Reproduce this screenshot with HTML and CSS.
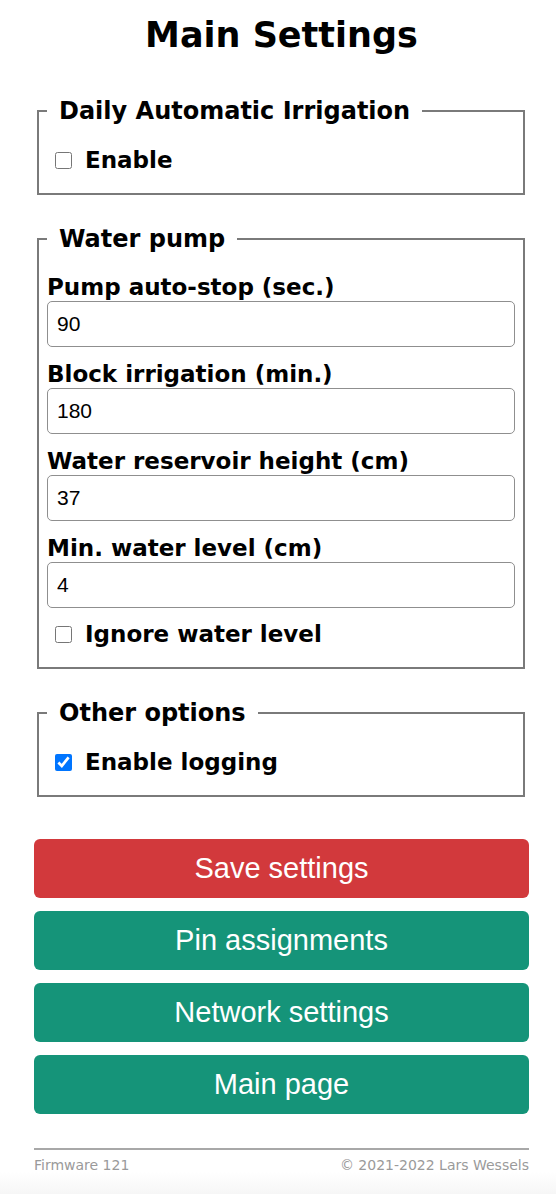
FILE: index.html
```html
<!DOCTYPE html>
<html lang="en">
<head>
<meta charset="utf-8">
<title>Main Settings</title>
<link rel="stylesheet" href="styles.css">
</head>
<body>
<div class="page">
  <h1 class="title">Main Settings</h1>
  <form class="settings">
    <fieldset class="group">
      <legend class="group-title">Daily Automatic Irrigation</legend>
      <label class="check"><input type="checkbox" class="box"><span>Enable</span></label>
    </fieldset>

    <fieldset class="group">
      <legend class="group-title">Water pump</legend>
      <div class="field">
        <label class="field-label">Pump auto-stop (sec.)</label>
        <input class="text-input" type="text" value="90">
      </div>
      <div class="field">
        <label class="field-label">Block irrigation (min.)</label>
        <input class="text-input" type="text" value="180">
      </div>
      <div class="field">
        <label class="field-label">Water reservoir height (cm)</label>
        <input class="text-input" type="text" value="37">
      </div>
      <div class="field">
        <label class="field-label">Min. water level (cm)</label>
        <input class="text-input" type="text" value="4">
      </div>
      <label class="check"><input type="checkbox" class="box"><span>Ignore water level</span></label>
    </fieldset>

    <fieldset class="group">
      <legend class="group-title">Other options</legend>
      <label class="check"><input type="checkbox" class="box" checked><span>Enable logging</span></label>
    </fieldset>

    <div class="actions">
      <button type="button" class="btn btn-save">Save settings</button>
      <button type="button" class="btn btn-nav">Pin assignments</button>
      <button type="button" class="btn btn-nav">Network settings</button>
      <button type="button" class="btn btn-nav">Main page</button>
    </div>
  </form>
  <footer class="footer">
    <span>Firmware 121</span>
    <span>© 2021-2022 Lars Wessels</span>
  </footer>
</div>
</body>
</html>
```

FILE: styles.css
```css
html {
  background: linear-gradient(to bottom, #ffffff 0, #ffffff 1172px, #f6f6f6 1194px);
  min-height: 100%;
}
body {
  margin: 0;
  font-family: "DejaVu Sans", Verdana, sans-serif;
  color: #000;
}
.page {
  width: 495px;
  margin-left: 34px;
  padding-top: 14px;
}
.title {
  margin: 0 0 41px;
  text-align: center;
  font-size: 35px;
  line-height: 42px;
  font-weight: bold;
}
.settings {
  margin: 0;
}
.group {
  margin: 0 4px 30px 3px;
  border: 2px solid #7a7a7a;
  padding: 7px 8px 19px;
  min-width: 0;
}
.group-title {
  padding: 0 12px;
  font-size: 24px;
  line-height: 28px;
  font-weight: bold;
}
.field {
  margin-top: 13px;
}
.field-label {
  display: block;
  padding-top: 1px;
  font-size: 23px;
  line-height: 27px;
  font-weight: bold;
}
.text-input {
  display: block;
  box-sizing: border-box;
  width: 100%;
  height: 46px;
  margin: 0;
  padding: 0 9px;
  border: 1px solid #8f8f8f;
  border-radius: 5px;
  font-family: "Liberation Sans", Arial, sans-serif;
  font-size: 21px;
  color: #000;
  background: #fff;
}
.check {
  display: flex;
  align-items: center;
  margin-top: 14px;
  margin-left: 8px;
  font-size: 23px;
  line-height: 28px;
  font-weight: bold;
}
.field + .check {
  margin-top: 12px;
}
.box {
  width: 17px;
  height: 17px;
  margin: 0 13px 0 0;
}
.actions {
  display: flex;
  flex-direction: column;
  gap: 13px;
  margin-top: 42px;
}
.btn {
  display: block;
  width: 100%;
  height: 59px;
  border: none;
  border-radius: 6px;
  font-family: "Liberation Sans", Arial, sans-serif;
  font-size: 29px;
  color: #fff;
  cursor: pointer;
}
.btn-save {
  background: #d2393c;
}
.btn-nav {
  background: #159479;
}
.footer {
  display: flex;
  justify-content: space-between;
  margin-top: 34px;
  padding-top: 6px;
  border-top: 2px solid #a8a8a8;
  font-size: 14px;
  line-height: 18px;
  color: #9a9a9a;
}
```
